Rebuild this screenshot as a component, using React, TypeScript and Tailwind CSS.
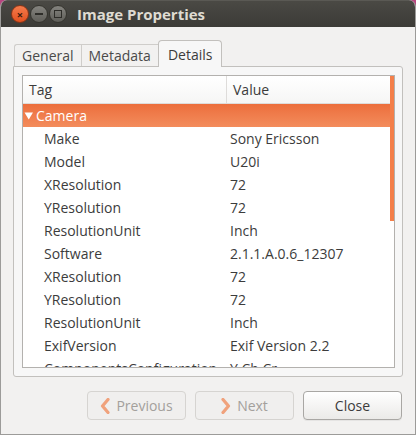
import React from "react";

const rows: [string, string][] = [
  ["Make", "Sony Ericsson"],
  ["Model", "U20i"],
  ["XResolution", "72"],
  ["YResolution", "72"],
  ["ResolutionUnit", "Inch"],
  ["Software", "2.1.1.A.0.6_12307"],
  ["XResolution", "72"],
  ["YResolution", "72"],
  ["ResolutionUnit", "Inch"],
  ["ExifVersion", "Exif Version 2.2"],
  ["ComponentsConfiguration", "Y Cb Cr -"],
];

function Chevron({ dir }: { dir: "left" | "right" }) {
  return (
    <svg width="10" height="16" viewBox="0 0 10 16">
      <path
        d={dir === "left" ? "M8 1.5 L2.5 8 L8 14.5" : "M2 1.5 L7.5 8 L2 14.5"}
        fill="none"
        stroke="#f0a27c"
        strokeWidth="3.2"
        strokeLinecap="round"
        strokeLinejoin="round"
      />
    </svg>
  );
}

export default function App() {
  return (
    <div className="w-[416px] h-[435px] overflow-hidden bg-[#b8457f] font-['Open_Sans',sans-serif] text-[14px] text-[#3c3c3c]">
      <div className="flex flex-col h-full rounded-t-[7px] overflow-hidden bg-[#f2f1f0] border-x border-b border-[#9c9b99]">
        {/* title bar */}
        <div className="h-[27px] shrink-0 flex items-center bg-gradient-to-b from-[#4a4944] to-[#3c3b37] border-t border-[#5a5954]">
          <div className="flex items-center gap-[1px] pl-[10px]">
            <div className="w-[18px] h-[18px] rounded-full bg-gradient-to-b from-[#f57b4b] to-[#e1501e] border border-[#8a3517] flex items-center justify-center text-[#3a1a0c] text-[11px] font-bold leading-none">
              ×
            </div>
            <div className="w-[18px] h-[18px] rounded-full bg-gradient-to-b from-[#85847f] to-[#5f5e59] border border-[#36352f] flex items-center justify-center">
              <div className="w-[8px] h-[2px] bg-[#2e2d29]" />
            </div>
            <div className="w-[18px] h-[18px] rounded-full bg-gradient-to-b from-[#85847f] to-[#5f5e59] border border-[#36352f] flex items-center justify-center">
              <div className="w-[8px] h-[8px] border-[1.5px] border-[#2e2d29]" />
            </div>
          </div>
          <span className="ml-[10px] text-[15px] font-bold text-[#dfdbd2]">Image Properties</span>
        </div>

        {/* notebook */}
        <div className="flex flex-col px-[12px] pt-[12px]">
          <div className="flex items-end h-[27px] pl-[1px]">
            <div className="h-[22px] px-[7px] flex items-center border-l border-t border-[#cfcdca] rounded-tl-[3px] text-[#4a4a4a]">
              General
            </div>
            <div className="h-[22px] px-[7px] flex items-center border-l border-t border-[#cfcdca] text-[#4a4a4a]">
              Metadata
            </div>
            <div className="h-[27px] px-[9px] -mb-px flex items-center bg-[#f7f7f7] border border-b-0 border-[#c2c0bd] rounded-t-[4px] relative z-10">
              Details
            </div>
          </div>
          <div className="h-[311px] bg-[#f7f7f7] border border-[#c2c0bd] rounded-[3px] rounded-tl-none pt-[8px] pl-[8px] pr-[7px] pb-[8px]">
            <div className="relative h-full bg-white border border-[#b3b1ae] overflow-hidden">
              <div className="flex h-[28px] border-b border-[#dedcda] bg-gradient-to-b from-white to-[#f6f6f5]">
                <div className="w-[204px] pl-[6px] flex items-center border-r border-[#dedcda]">Tag</div>
                <div className="pl-[6px] flex items-center">Value</div>
              </div>
              <div className="h-[23px] flex items-center bg-gradient-to-b from-[#ec6e3c] to-[#f38c5c] text-white">
                <svg width="10" height="8" viewBox="0 0 10 8" className="ml-[1px]">
                  <path d="M0.5 0.5 H9 L4.75 7.5 Z" fill="white" />
                </svg>
                <span className="ml-[2px]">Camera</span>
              </div>
              {rows.map(([tag, value], i) => (
                <div key={i} className="h-[23px] flex items-center">
                  <div className="w-[207px] pl-[21px] whitespace-nowrap overflow-hidden">{tag}</div>
                  <div className="whitespace-nowrap">{value}</div>
                </div>
              ))}
              <div className="absolute right-0 top-0 w-[4px] h-[145px] bg-[#f47f4a]" />
            </div>
          </div>
        </div>

        {/* buttons */}
        <div className="flex justify-end gap-[9px] pr-[13px] pt-[14px]">
          <button className="w-[99px] h-[29px] flex items-center justify-center gap-[6px] rounded-[4px] border border-[#d6d4d1] bg-[#f0efee] text-[#a3a09c]">
            <Chevron dir="left" />
            Previous
          </button>
          <button className="w-[99px] h-[29px] flex items-center justify-center gap-[6px] rounded-[4px] border border-[#d6d4d1] bg-[#f0efee] text-[#a3a09c]">
            <Chevron dir="right" />
            Next
          </button>
          <button className="w-[99px] h-[29px] flex items-center justify-center rounded-[4px] border border-[#a9a7a4] bg-gradient-to-b from-white to-[#ebeae8] text-[#3c3c3c] shadow-[0_1px_0_rgba(0,0,0,0.05)]">
            Close
          </button>
        </div>
      </div>
    </div>
  );
}
